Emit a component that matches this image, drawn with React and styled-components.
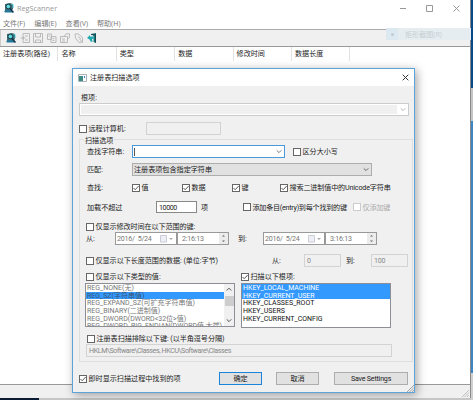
import styled, { createGlobalStyle } from "styled-components";

function App() {
  return (
    <Desktop>
      <GlobalStyle />
      <DesktopEdge>
        <i />
        <b />
        <em />
      </DesktopEdge>
      <MainWindow>
        <TitleBar>
          <ScannerIcon />
          <AppTitle>RegScanner</AppTitle>
          <WindowButtons />
        </TitleBar>
        <MenuBar>
          {menus.map((menu) => (
            <MenuItem key={menu}>{menu}</MenuItem>
          ))}
        </MenuBar>
        <ToolBar>
          <ScannerIcon />
          {toolIcons.map((paths, index) => (
            <ToolIcon key={index} paths={paths} />
          ))}
          <ExitIcon />
        </ToolBar>
        <ListHeader>
          {columns.map((column) => (
            <Column key={column}>{column}</Column>
          ))}
        </ListHeader>
        <ListBody />
        <StatusBar>
          <Grip color="#bbb" />
        </StatusBar>
      </MainWindow>
      <GhostMenu>
        <span>矩形截图(R)</span>
      </GhostMenu>
      <ScanDialog />
    </Desktop>
  );
}

export default App;

const menus = ["文件(F)", "编辑(E)", "查看(V)", "帮助(H)"];

const columns = ["注册表项(路径)", "名称", "类型", "数据", "修改时间", "数据长度"];

const toolIcons = [
  "M3 .5H9.500V9.500H3zM5 3H8M5 7H8M.5 5H5.500M3.500 3.500V6.500",
  "M.5 .5H9.500V9.500H.5zM2.500 .5V4H7.500V.5M2.500 9.500V7H7.500V9.500",
  "M.5 1H4.500V6.500H.5zM4 3.500H9V9.500H4zM5.500 5.500H7.500M5.500 7.500H7.500M1.500 3H3",
  "M.5 3.500H7.500V9.500H.5zM4 3.500L6 .8H9.500V4.500L7.500 6M2 6H5M2 8H5",
  "M1 1L4 .8L8.500 4.500V9L5 9.500L1.500 5zM4 3.500L7 6M5.500 6L8.500 9.500",
];

const types = [
  "REG_NONE(无)",
  "REG_SZ(字符串值)",
  "REG_EXPAND_SZ(可扩充字符串值)",
  "REG_BINARY(二进制值)",
  "REG_DWORD(DWORD<32位>值)",
  "REG_DWORD_BIG_ENDIAN(DWORD值,大端)",
];

const rootKeys = [
  "HKEY_LOCAL_MACHINE",
  "HKEY_CURRENT_USER",
  "HKEY_CLASSES_ROOT",
  "HKEY_USERS",
  "HKEY_CURRENT_CONFIG",
];

function ScanDialog() {
  return (
    <Dialog>
      <DialogTitle>
        <svg width="9" height="8" viewBox="0 0 9 8">
          <path d="M.5 .5H8.500V7.500H.5z" fill="#fff" stroke="#aab4b8" />
          <path d="M1 2H5V7H1z" fill="#3b8b82" />
          <path d="M6.500 2V4" stroke="#447fc0" />
        </svg>
        <span>注册表扫描选项</span>
        <svg width="7" height="7" viewBox="0 0 7 7">
          <path d="M.7 .7L6.300 6.300M6.300 .7L.7 6.300" stroke="#333" />
        </svg>
      </DialogTitle>
      <Row $top={7} $h={9} $left={8}>
        <Text>根项:</Text>
      </Row>
      <Row $top={1} $h={13} $left={6}>
        <RootCombo>
          <Chevron color="#b5b5b5" />
        </RootCombo>
      </Row>
      <Row $top={6} $h={13} $left={6}>
        <Check $w={67} label="远程计算机:" />
        <Input $w={75} $disabled />
      </Row>

      <Group>
        <Legend>扫描选项</Legend>
        <Row $top={5} $h={13} $left={7}>
          <Text $w={45}>查找字符串:</Text>
          <FindCombo>
            <Caret />
            <Chevron color="#777" />
          </FindCombo>
          <Check $left={8} label="区分大小写" />
        </Row>
        <Row $top={5} $h={13} $left={7}>
          <Text $w={45}>匹配:</Text>
          <MatchSelect>
            <Text>注册表项包含指定字符串</Text>
            <Chevron color="#666" />
          </MatchSelect>
        </Row>
        <Row $top={7} $h={9} $left={7}>
          <Text $w={45}>查找:</Text>
          <Check $w={50} checked label="值" />
          <Check $w={50} checked label="数据" />
          <Check $w={48} checked label="键" />
          <Check checked $spacing={-0.15} label="搜索二进制值中的Unicode字符串" />
        </Row>
        <Row $top={9} $h={12} $left={7}>
          <Text $w={69}>加载不超过</Text>
          <Input $w={41} $dark $spacing={-0.4}>
            10000
          </Input>
          <Text $left={4} $w={42}>
            项
          </Text>
          <Check $w={110} $spacing={-0.25} label="添加条目(entry)到每个找到的键" />
          <Check disabled $spacing={-0.15} label="仅添加键" />
        </Row>
        <Row $top={9} $h={9} $left={6}>
          <Check $spacing={-0.1} label="仅显示修改时间在以下范围的键:" />
        </Row>
        <Row $top={1} $h={13} $left={6}>
          <Text $w={29}>从:</Text>
          <DateTime time="2:16:13" />
          <Text $left={9} $w={25}>
            到:
          </Text>
          <DateTime time="3:16:13" />
        </Row>
        <Row $top={9} $h={13} $left={6}>
          <Check $w={186} $spacing={-0.05} label="仅显示以下长度范围的数据: (单位:字节)" />
          <Text $w={32}>从:</Text>
          <Input $w={37} $disabled>
            0
          </Input>
          <Text $left={5} $w={25}>
            到:
          </Text>
          <Input $w={37} $disabled $spacing={-0.2}>
            100
          </Input>
        </Row>
        <Row $top={5} $h={9} $left={6}>
          <Check $w={155} $spacing={-0.05} label="仅显示以下类型的值:" />
          <Check checked label="扫描以下根项:" />
        </Row>
        <Row $top={2} $h={45} $left={5}>
          <ListBox $muted>
            <Options>
              {types.map((type, index) => (
                <Option key={type} $selected={index === 1} $muted>
                  {type}
                </Option>
              ))}
            </Options>
            <ScrollBar>
              <Chevron color="#555" up />
              <Thumb />
              <Chevron color="#555" />
            </ScrollBar>
          </ListBox>
          <ListBox>
            <Options>
              {rootKeys.map((key, index) => (
                <Option key={key} $selected={index < 2}>
                  {key}
                </Option>
              ))}
            </Options>
          </ListBox>
        </Row>
        <Row $top={6} $h={9} $left={7}>
          <Check $spacing={-0.05} label="注册表扫描排除以下键: (以半角逗号分隔)" />
        </Row>
        <Row $top={1} $h={13} $left={6}>
          <Input $w={306} $disabled $spacing={-0.4}>
            HKLM\Software\Classes, HKCU\Software\Classes
          </Input>
        </Row>
      </Group>

      <Row $top={10} $h={13} $left={6}>
        <Check $w={140} checked label="即时显示扫描过程中找到的项" />
        <Button $w={43} $primary>
          确定
        </Button>
        <Button $w={43} $left={14}>
          取消
        </Button>
        <Button $w={74} $left={15}>
          Save Settings
        </Button>
      </Row>
      <DialogGrip>
        <Grip color="#999" />
      </DialogGrip>
    </Dialog>
  );
}

function Check({ label, checked, disabled, $w, $left, $spacing }) {
  return (
    <CheckWrap $w={$w} $left={$left} $disabled={disabled}>
      <CheckBox $disabled={disabled}>
        {checked && (
          <svg width="6" height="6" viewBox="0 0 6 6">
            <path d="M.5 3L2.200 4.700L5.700 1" fill="none" stroke="#444" strokeWidth=".9" />
          </svg>
        )}
      </CheckBox>
      <CheckLabel $spacing={$spacing}>{label}</CheckLabel>
    </CheckWrap>
  );
}

function DateTime({ time }) {
  return (
    <DateTimeWrap>
      <DateBox>
        <span>2016/&nbsp; 5/24</span>
        <svg width="14" height="8" viewBox="0 0 14 8">
          <path d="M.5 .5H6.500V7H.5z" fill="#eef0f5" stroke="#c9ccd6" />
          <path d="M9 3H13L11 5z" fill="#aaa" />
        </svg>
      </DateBox>
      <TimeBox>
        <span>{time}</span>
        <Spinner>
          <svg width="7" height="9" viewBox="0 0 7 9">
            <path d="M2 2.500L3.500 1L5 2.500zM2 6.500L3.500 8L5 6.500z" fill="#666" />
          </svg>
        </Spinner>
      </TimeBox>
    </DateTimeWrap>
  );
}

function Chevron({ color, up }) {
  return (
    <svg width="6" height="5" viewBox="0 0 6 5">
      <path d={up ? "M.7 3.500L3 1.200L5.300 3.500" : "M.7 1.300L3 3.600L5.300 1.300"} fill="none" stroke={color} />
    </svg>
  );
}

function ScannerIcon() {
  return (
    <svg width="10" height="10" viewBox="0 0 10 10">
      <path d="M1 1L6 0L9 1V6L7 8H1z" fill="#416b72" />
      <path d="M0 8L3 7H7L9 9.500H1z" fill="#24799b" />
      <circle cx="4.300" cy="3.500" r="2.300" fill="#62dfe2" stroke="#173f49" />
      <path d="M6 5.500L9.500 9.500" stroke="#132e4c" strokeWidth="1.500" />
      <path d="M7.500 1.500H9V5" fill="none" stroke="#43bfc8" />
    </svg>
  );
}

function ToolIcon({ paths }) {
  return (
    <svg width="10" height="10" viewBox="0 0 10 10">
      <path d={paths} fill="none" stroke="#b4b4b4" strokeWidth=".9" />
    </svg>
  );
}

function ExitIcon() {
  return (
    <svg width="10" height="10" viewBox="0 0 10 10">
      <path d="M4 1L9 0V10L6.500 9V3z" fill="#17777f" />
      <path d="M0 5L3 2V3.500H6.500V6H5L5.500 9L3.500 8.500L2.500 6.500z" fill="#20a9ae" />
      <path d="M4 1.500H8.500V9.500" fill="none" stroke="#17484e" />
    </svg>
  );
}

function WindowButtons() {
  return (
    <svg width="60" height="8" viewBox="0 0 60 8">
      <path d="M0 4.500H6M26.500 1.500H32.500V7.500H26.500zM53.500 1.500L59.500 7.500M59.500 1.500L53.500 7.500" fill="none" stroke="#999" />
    </svg>
  );
}

function Grip({ color }) {
  return (
    <svg width="7" height="7" viewBox="0 0 7 7">
      <path d="M0 7L7 0M2.500 7L7 2.500M5 7L7 5" stroke={color} strokeWidth=".9" />
    </svg>
  );
}

const GlobalStyle = createGlobalStyle`
  * {
    box-sizing: border-box;
  }
  body {
    margin: 0;
    overflow: hidden;
    font-family: "Open Sans", "Noto Sans CJK SC", sans-serif;
    font-size: 7.1px;
    line-height: 9px;
    color: #222;
  }
  svg {
    display: block;
    flex: none;
  }
`;

const Desktop = styled.div`
  position: relative;
  width: 473px;
  height: 400px;
  overflow: hidden;
  background: linear-gradient(90deg, #0b1b33 39px, #c6c6c6 39px);
`;

const DesktopEdge = styled.div`
  position: absolute;
  top: 0;
  right: 0;
  width: 2px;
  height: 400px;
  display: flex;
  flex-direction: column;
  background: #d0d0d0;
  i {
    height: 88px;
    background: #07498a;
  }
  b {
    height: 33px;
    background: #c4c4c4;
  }
  em {
    height: 252px;
    background: #3d86c6;
  }
`;

const MainWindow = styled.div`
  width: 471px;
  height: 398px;
  display: flex;
  flex-direction: column;
  background: #fff;
  border-right: 1px solid #8a8a8a;
`;

const TitleBar = styled.div`
  height: 17px;
  padding: 0 10px 1px 4px;
  display: flex;
  align-items: center;
`;

const AppTitle = styled.span`
  flex: 1;
  margin-left: 3px;
  font-size: 7.3px;
  color: #999;
`;

const MenuBar = styled.div`
  height: 12px;
  padding-left: 3px;
  display: flex;
  align-items: center;
`;

const MenuItem = styled.span`
  width: 31.300px;
  font-size: 7.1px;
  color: #777;
`;

const ToolBar = styled.div`
  height: 18px;
  padding: 0 6px 1px;
  display: flex;
  align-items: center;
  gap: 3.500px;
  background: #f0f0f0;
  border-top: 1px solid #aaa;
  border-bottom: 1px solid #999;
  box-shadow: inset 1px 0 #ccc;
`;

const ListHeader = styled.div`
  height: 14px;
  display: flex;
`;

const Column = styled.div`
  width: 58.400px;
  padding-left: 3px;
  line-height: 13px;
  border-right: 1px solid #e2e2e2;
`;

const ListBody = styled.div`
  flex: 1;
`;

const StatusBar = styled.div`
  height: 14px;
  padding: 0 1px 1px;
  display: flex;
  justify-content: flex-end;
  align-items: flex-end;
  background: #f0f0f0;
  border-top: 1px solid #999;
`;

/* faded menu that floats over the toolbar */
const GhostMenu = styled.div`
  position: absolute;
  top: 28px;
  left: 386px;
  width: 85px;
  height: 12px;
  padding-left: 19px;
  line-height: 12px;
  color: #c5cdd2;
  background: linear-gradient(90deg, #dde9f0 12px, #e5edf1 12px);
  &::before {
    content: "";
    position: absolute;
    top: 5px;
    left: 5px;
    width: 3px;
    height: 3px;
    border-radius: 50%;
    background: #bccbd4;
  }
`;

const Dialog = styled.div`
  position: absolute;
  top: 68px;
  left: 72px;
  width: 343px;
  height: 325px;
  font-family: Roboto, "Noto Sans CJK SC", sans-serif;
  background: #f0f0f0;
  border: 1px solid #5ba3d9;
  box-shadow: 2px 2px 9px rgba(0, 0, 0, 0.35);
`;

const DialogTitle = styled.div`
  height: 17px;
  padding: 0 5px 0 5px;
  display: flex;
  align-items: center;
  background: #fff;
  span {
    flex: 1;
    margin-left: 3px;
  }
`;

const Row = styled.div`
  height: ${(props) => props.$h}px;
  margin-top: ${(props) => props.$top}px;
  padding-left: ${(props) => props.$left}px;
  display: flex;
  align-items: center;
  white-space: nowrap;
`;

const Text = styled.span`
  flex: none;
  width: ${(props) => (props.$w ? `${props.$w}px` : "auto")};
  margin-left: ${(props) => props.$left || 0}px;
`;

const CheckWrap = styled.label`
  flex: none;
  width: ${(props) => (props.$w ? `${props.$w}px` : "auto")};
  margin-left: ${(props) => props.$left || 0}px;
  display: flex;
  align-items: center;
  color: ${(props) => (props.$disabled ? "#aaa" : "inherit")};
`;

const CheckBox = styled.span`
  flex: none;
  width: 8px;
  height: 8px;
  margin-right: 1.500px;
  display: flex;
  align-items: center;
  justify-content: center;
  background: #fff;
  border: 1px solid ${(props) => (props.$disabled ? "#ccc" : "#666")};
`;

const CheckLabel = styled.span`
  letter-spacing: ${(props) => props.$spacing || 0}px;
`;

const Input = styled.div`
  flex: none;
  width: ${(props) => props.$w}px;
  height: 100%;
  padding-left: 2px;
  display: flex;
  align-items: center;
  letter-spacing: ${(props) => props.$spacing || 0}px;
  color: ${(props) => (props.$disabled ? "#888" : "#222")};
  background: ${(props) => (props.$disabled ? "#f0f0f0" : "#fff")};
  border: 1px solid ${(props) => (props.$dark ? "#888" : "#d3d3d3")};
`;

const RootCombo = styled.div`
  width: 330px;
  height: 13px;
  padding-right: 2px;
  display: flex;
  align-items: center;
  justify-content: flex-end;
  background: linear-gradient(90deg, #f0f0f0 317px, #fff 317px);
  border: 1px solid #ccc;
  box-shadow: inset 0 0 0 1px #fff;
`;

const FindCombo = styled.div`
  width: 153px;
  height: 13px;
  padding: 0 2px 0 1px;
  display: flex;
  align-items: center;
  justify-content: space-between;
  background: #fff;
  border: 1px solid #4b9bdc;
`;

const Caret = styled.i`
  width: 1px;
  height: 8px;
  background: #555;
`;

const MatchSelect = styled.div`
  width: 240px;
  height: 13px;
  padding: 0 2px 0 1px;
  display: flex;
  align-items: center;
  justify-content: space-between;
  background: #e1e1e1;
  border: 1px solid #adadad;
`;

const Group = styled.div`
  position: relative;
  width: 334px;
  height: 223px;
  margin: 4px 0 0 6px;
  border: 1px solid #dedede;
`;

const Legend = styled.span`
  position: absolute;
  top: -4px;
  left: 4px;
  padding: 0 1px;
  background: #f0f0f0;
`;

const DateTimeWrap = styled.div`
  width: 114px;
  height: 13px;
  display: flex;
  letter-spacing: -0.25px;
  color: #777;
`;

const DateBox = styled.div`
  width: 62px;
  padding: 0 2px 0 1px;
  display: flex;
  align-items: center;
  justify-content: space-between;
  background: #fff;
  border: 1px solid #999;
`;

const TimeBox = styled.div`
  width: 52px;
  padding-left: 4px;
  display: flex;
  align-items: center;
  justify-content: space-between;
  background: #fff;
  border: 1px solid #999;
`;

const Spinner = styled.div`
  width: 9px;
  height: 100%;
  display: flex;
  align-items: center;
  justify-content: center;
  background: #ececec;
`;

const ListBox = styled.div`
  width: 150px;
  height: ${(props) => (props.$muted ? 44 : 45)}px;
  margin-right: 6px;
  display: flex;
  align-self: flex-start;
  background: #fff;
  border: 1px solid #8e8e96;
`;

const Options = styled.div`
  flex: 1;
  overflow: hidden;
`;

const Option = styled.div`
  height: 7.700px;
  padding-left: 1px;
  line-height: 9px;
  font-size: 7px;
  color: ${(props) => (props.$muted ? (props.$selected ? "#3a5472" : "#777") : props.$selected ? "#fff" : "#111")};
  background: ${(props) => (props.$selected ? "#3399ff" : "transparent")};
`;

const ScrollBar = styled.div`
  width: 10px;
  padding: 3px 0;
  display: flex;
  flex-direction: column;
  align-items: center;
  justify-content: space-between;
  background: #f0f0f0;
`;

const Thumb = styled.div`
  width: 9px;
  height: 10px;
  margin: 3px 0 12px;
  background: #cdcdcd;
`;

const Button = styled.div`
  width: ${(props) => props.$w}px;
  height: 13px;
  margin-left: ${(props) => props.$left || 0}px;
  display: flex;
  align-items: center;
  justify-content: center;
  letter-spacing: -0.2px;
  background: #e1e1e1;
  border: 1px solid ${(props) => (props.$primary ? "#1c83da" : "#adadad")};
`;

const DialogGrip = styled.div`
  position: absolute;
  right: 0;
  bottom: 0;
`;
